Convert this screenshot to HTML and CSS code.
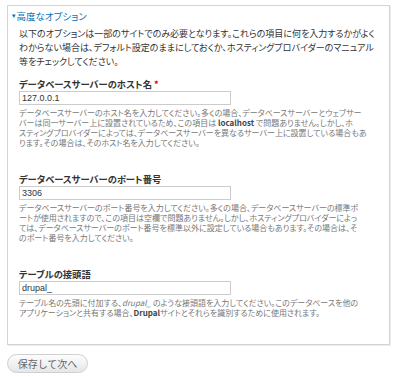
FILE: index.html
```html
<!DOCTYPE html>
<html lang="ja">

<head>
  <meta charset="UTF-8">
  <meta name="viewport" content="width=device-width, initial-scale=1.0">
  <title>高度なオプション</title>
  <link rel="stylesheet" href="styles.css">
</head>

<body>
  <div class="fieldset">
    <div class="legend"><span class="arrow">▾</span>高度なオプション</div>
    <p class="intro">以下のオプションは一部のサイトでのみ必要となります。これらの項目に何を入力するかがよく<br>わからない場合は、デフォルト設定のままにしておくか、ホスティングプロバイダーのマニュアル<br>等をチェックしてください。</p>

    <div class="form-item">
      <label>データベースサーバーのホスト名 <span class="required">*</span></label>
      <input type="text" value="127.0.0.1">
      <div class="description">データベースサーバーのホスト名を入力してください。多くの場合、データベースサーバーとウェブサー<br>バーは同一サーバー上に設置されているため、この項目は <strong>localhost</strong> で問題ありません。しかし、ホ<br>スティングプロバイダーによっては、データベースサーバーを異なるサーバー上に設置している場合もあ<br>ります。その場合は、そのホスト名を入力してください。</div>
    </div>

    <div class="form-item">
      <label>データベースサーバーのポート番号</label>
      <input type="text" value="3306">
      <div class="description">データベースサーバーのポート番号を入力してください。多くの場合、データベースサーバーの標準ポ<br>ートが使用されますので、この項目は空欄で問題ありません。しかし、ホスティングプロバイダーによっ<br>ては、データベースサーバーのポート番号を標準以外に設定している場合もあります。その場合は、そ<br>のポート番号を入力してください。</div>
    </div>

    <div class="form-item">
      <label>テーブルの接頭語</label>
      <input type="text" value="drupal_">
      <div class="description">テーブル名の先頭に付加する、<em>drupal_</em> のような接頭語を入力してください。このデータベースを他の<br>アプリケーションと共有する場合、<strong>Drupal</strong>サイトとそれらを識別するために使用されます。</div>
    </div>
  </div>

  <button class="button">保存して次へ</button>
</body>

</html>
```

FILE: styles.css
```css
* {
  margin: 0;
  padding: 0;
  box-sizing: border-box;
}

body {
  background: #fff;
  color: #333;
  font-family: "Noto Sans CJK JP", "Liberation Sans", sans-serif;
  font-feature-settings: "palt";
  padding: 5px 0 0 7px;
}

.fieldset {
  width: 383px;
  height: 340px;
  border: 1px solid #d4d4d4;
  box-shadow: 1px 1px 0 #ececec;
  padding: 4px 11px 0 11px;
}

.legend {
  color: #0074bd;
  font-size: 9.5px;
  line-height: 12px;
  height: 12px;
  margin-left: -7px;
  white-space: nowrap;
}

.legend .arrow {
  font-family: "DejaVu Sans", sans-serif;
  font-size: 7px;
  line-height: 12px;
  vertical-align: top;
  margin-right: 1px;
}

.intro {
  font-size: 9px;
  line-height: 14px;
  margin-top: 5px;
  white-space: nowrap;
}

.form-item {
  margin-top: 9px;
  margin-bottom: 25px;
}

.form-item + .form-item {
  margin-top: 0;
}

.form-item label {
  display: block;
  font-size: 9.3px;
  font-weight: bold;
  line-height: 12px;
  height: 12px;
  margin-bottom: 1px;
}

.required {
  color: #e00;
}

.form-item input {
  display: block;
  width: 212px;
  height: 14px;
  border: 1px solid #ccc;
  font-family: "Liberation Sans", sans-serif;
  font-size: 9px;
  color: #333;
  padding: 0 2px;
  margin-bottom: 3px;
}

.description {
  color: #777;
  font-size: 8px;
  line-height: 10px;
  white-space: nowrap;
}

.description strong {
  color: #444;
}

.button {
  margin-top: 9px;
  width: 81px;
  height: 19px;
  border: 1px solid #d0d0d0;
  border-radius: 10px;
  background: linear-gradient(#fdfdfd, #e6e6e6);
  color: #666;
  font-family: "Noto Sans CJK JP", sans-serif;
  font-size: 10px;
}
```
